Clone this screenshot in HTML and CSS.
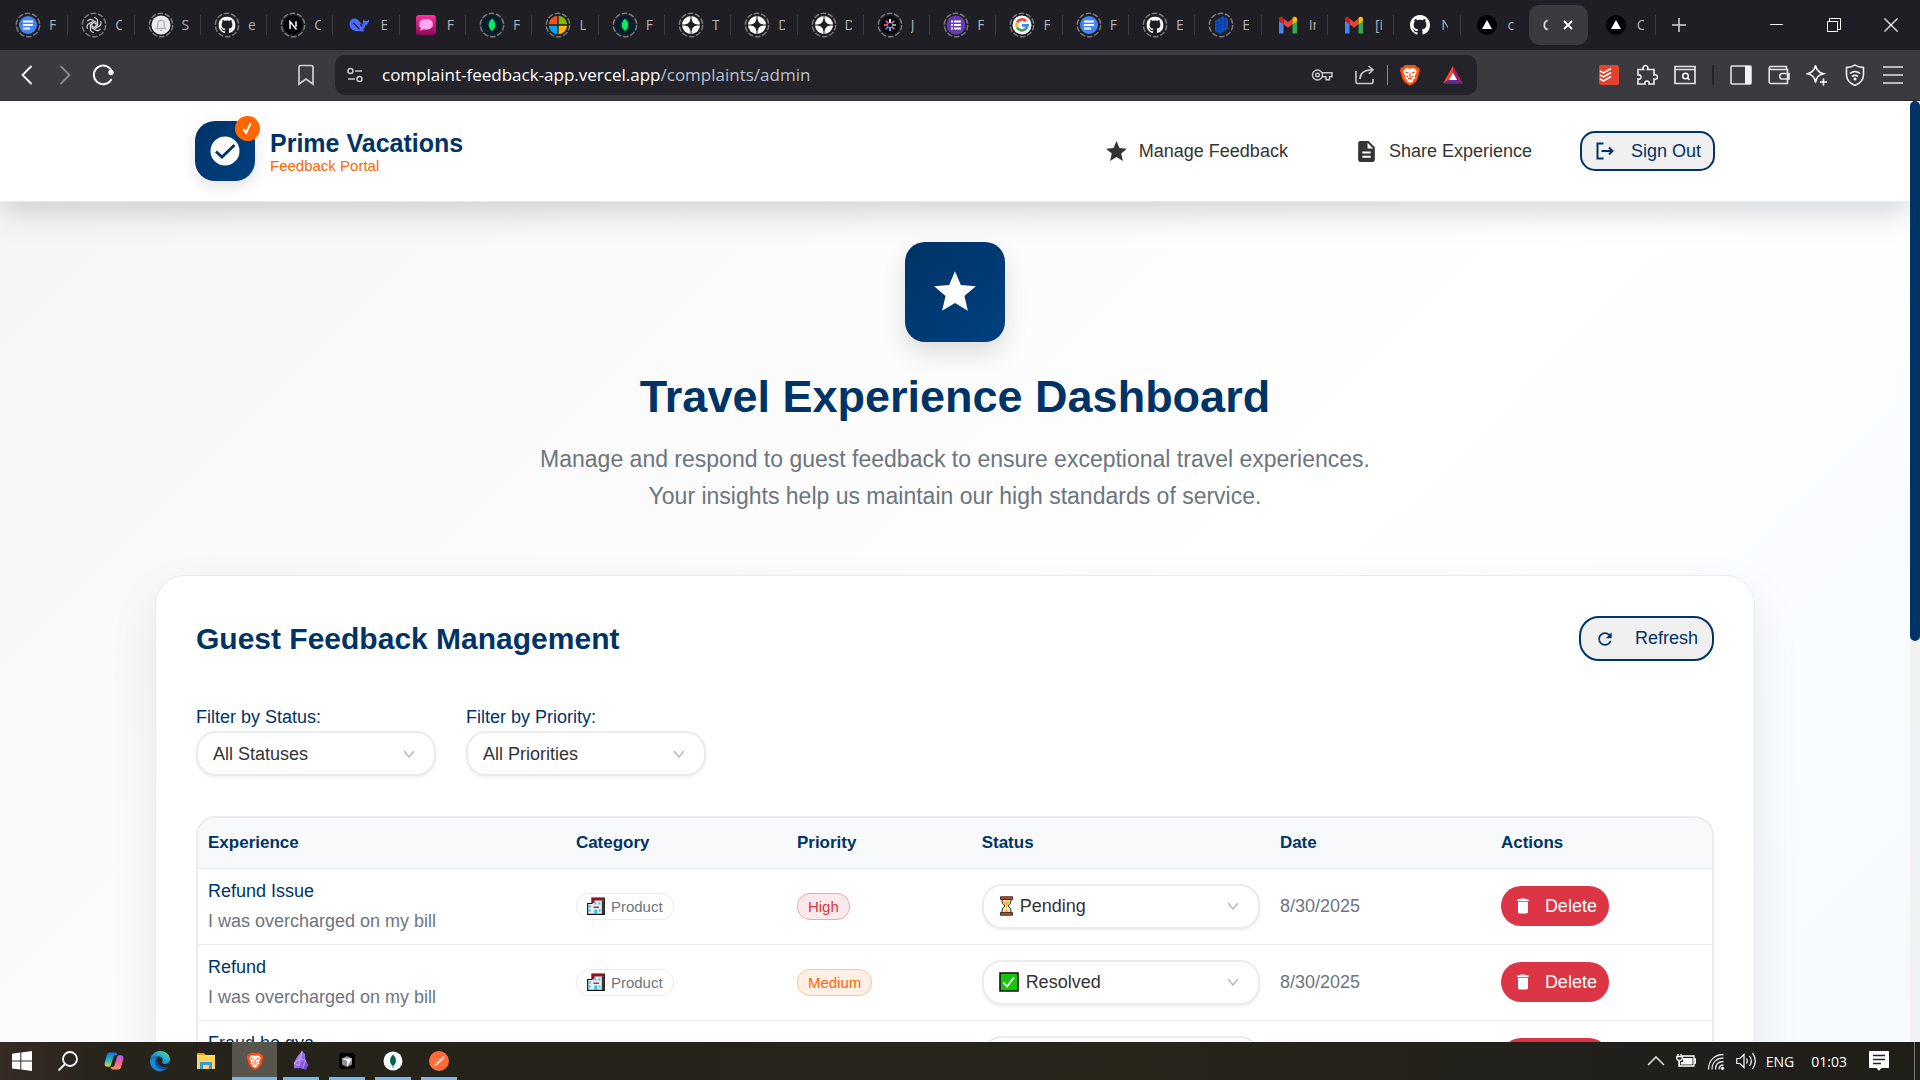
FILE: index.html
```html
<!DOCTYPE html>
<html lang="en">
<head>
<meta charset="utf-8">
<title>Travel Experience Dashboard</title>
<link rel="stylesheet" href="styles.css">
</head>
<body>
<svg class="defs" aria-hidden="true">
  <defs>
    <linearGradient id="gPink" x1="0" y1="0" x2="0" y2="1"><stop offset="0" stop-color="#ff2f9c"/><stop offset="1" stop-color="#8a0a58"/></linearGradient>
    <linearGradient id="gEdge" x1="0" y1="1" x2="1" y2="0"><stop offset="0" stop-color="#0c59a4"/><stop offset=".5" stop-color="#1b9de2"/><stop offset="1" stop-color="#66eb6e"/></linearGradient>
    <linearGradient id="gCopA" x1="0" y1="0" x2="0" y2="1"><stop offset="0" stop-color="#1b6fe0"/><stop offset=".5" stop-color="#22b6c0"/><stop offset="1" stop-color="#e6d040"/></linearGradient>
    <linearGradient id="gCopB" x1="0" y1="0" x2="0" y2="1"><stop offset="0" stop-color="#b45be8"/><stop offset=".5" stop-color="#f0609a"/><stop offset="1" stop-color="#ff9a4a"/></linearGradient>
    <linearGradient id="gGem" x1="0" y1="0" x2="1" y2="1"><stop offset="0" stop-color="#b79bff"/><stop offset="1" stop-color="#6a35d6"/></linearGradient>
    <symbol id="ring" viewBox="0 0 26 26"><circle cx="13" cy="13" r="11.7" fill="none" stroke="#77777c" stroke-width="1.5" stroke-dasharray="5.6 1.75"/></symbol>
    <symbol id="docs" viewBox="0 0 26 26"><use href="#ring"/><circle cx="13" cy="13" r="9" fill="#4285f4"/><path d="M8 9.5h10M8 13h10M8 16.5h7" stroke="#fff" stroke-width="1.8"/></symbol>
    <symbol id="openai" viewBox="0 0 26 26"><use href="#ring"/><g fill="none" stroke="#d6d6d8" stroke-width="1.2"><path id="petal" d="M13 5.500a3.600 3.600 0 0 1 3.600 3.600v4.200l-3.600 2.200"/><use href="#petal" transform="rotate(60 13 13)"/><use href="#petal" transform="rotate(120 13 13)"/><use href="#petal" transform="rotate(180 13 13)"/><use href="#petal" transform="rotate(240 13 13)"/><use href="#petal" transform="rotate(300 13 13)"/></g></symbol>
    <symbol id="bell" viewBox="0 0 26 26"><use href="#ring"/><circle cx="13" cy="13" r="9.5" fill="#ececec"/><path d="M8.5 16.5h9l-1.3-2v-3a3.2 3.2 0 0 0-6.4 0v3zM12 18.5h2M13 8V7" fill="none" stroke="#b4b4b4" stroke-width="1.3"/></symbol>
    <symbol id="octo" viewBox="0 0 16 16"><path fill="#fff" d="M8 0C3.58 0 0 3.58 0 8c0 3.54 2.29 6.53 5.47 7.59.4.07.55-.17.55-.38 0-.19-.01-.82-.01-1.49-2.01.37-2.53-.49-2.69-.94-.09-.23-.48-.94-.82-1.13-.28-.15-.68-.52-.01-.53.63-.01 1.08.58 1.23.82.72 1.21 1.87.87 2.33.66.07-.52.28-.87.51-1.07-1.78-.2-3.64-.89-3.64-3.95 0-.87.31-1.59.82-2.15-.08-.2-.36-1.02.08-2.12 0 0 .67-.21 2.2.82.64-.18 1.32-.27 2-.27s1.36.09 2 .27c1.53-1.04 2.2-.82 2.2-.82.44 1.1.16 1.92.08 2.12.51.56.82 1.27.82 2.15 0 3.07-1.87 3.75-3.65 3.95.29.25.54.73.54 1.48 0 1.07-.01 1.93-.01 2.2 0 .21.15.46.55.38A8.01 8.01 0 0016 8c0-4.42-3.58-8-8-8z"/></symbol>
    <symbol id="ghring" viewBox="0 0 26 26"><use href="#ring"/><use href="#octo" x="4.5" y="4.5" width="17" height="17"/></symbol>
    <symbol id="gh" viewBox="0 0 26 26"><use href="#octo" x="3" y="3" width="20" height="20"/></symbol>
    <symbol id="next" viewBox="0 0 26 26"><use href="#ring"/><circle cx="13" cy="13" r="9.5" fill="#000"/><path d="M10 17V9.5l6.5 8M16 9.3v5.500" fill="none" stroke="#fff" stroke-width="1.5"/></symbol>
    <symbol id="whale" viewBox="0 0 26 26"><path d="M3.500 12c0-3.500 2.400-5.500 5.300-5.500 2.200 0 3.200 1.500 5 3.300 1.200 1.200 2 2.600 3.800 2.600-1-1.800-.6-3.800-.3-5.500.9 1.500 1.900 2.300 3.200 2.200.9 0 1.600-.7 2.500-1.500.2 2.600-.8 5-3.500 5.700-.5 2.300-1.600 3.800-2.800 4.600.8.500 1.700.7 2.300.9-2 1.200-3.700.7-4.800.1-5.800 1.500-10.700-1.900-10.700-6.900z" fill="#4d6bfe"/><path d="M7 11c3.200 1 4 5.500 6.800 5.800M14 12.500c1.300.3 2 1.200 2 2.200" fill="none" stroke="#1f1e24" stroke-width="1.300"/></symbol>
    <symbol id="chat" viewBox="0 0 26 26"><rect x="3" y="3" width="20" height="20" rx="3" fill="url(#gPink)"/><path d="M13 7c4.200 0 7 2.200 7 5.300s-2.800 5.300-7 5.300c-1 0-1.800 0-2.700-.3L7 19l.8-3C6.600 15 6 13.800 6 12.300 6 9.200 8.800 7 13 7z" fill="#ffa8ee"/></symbol>
    <symbol id="leaf" viewBox="0 0 26 26"><use href="#ring"/><circle cx="13" cy="13" r="9.500" fill="#001e2b"/><path d="M13 6.500c2 2 3.300 4 3.300 6.800 0 2.200-1.300 4-3.300 5.700-2-1.700-3.300-3.500-3.300-5.700 0-2.800 1.300-4.800 3.300-6.800z" fill="#00ed64"/></symbol>
    <symbol id="ms" viewBox="0 0 26 26"><use href="#ring"/><path d="M12.300 12.300V3.800a9.200 9.200 0 0 0-8.500 8.500z" fill="#f25022"/><path d="M13.700 12.300V3.800a9.200 9.200 0 0 1 8.500 8.500z" fill="#7fba00"/><path d="M12.300 13.700v8.500a9.200 9.200 0 0 1-8.500-8.500z" fill="#00a4ef"/><path d="M13.700 13.700v8.500a9.200 9.200 0 0 0 8.500-8.500z" fill="#ffb900"/></symbol>
    <symbol id="star4" viewBox="0 0 26 26"><use href="#ring"/><circle cx="13" cy="13" r="9" fill="#fff"/><path d="M13 7c.8 3.300 2.300 5 5.500 6-3.200 1-4.700 2.700-5.500 6-.8-3.300-2.300-5-5.500-6 3.200-1 4.700-2.700 5.500-6zM13 3v4M13 19v4M4 13h4M18 13h4" fill="#1f1e24" stroke="#1f1e24" stroke-width="1"/></symbol>
    <symbol id="burst" viewBox="0 0 26 26"><use href="#ring"/><circle cx="13" cy="13" r="9.500" fill="#0b0b0e"/><g stroke-width="1.900"><path d="M13 11V7" stroke="#fff"/><path d="M13 15v4" stroke="#4fc3f7"/><path d="M11 13H7" stroke="#ff4f6d"/><path d="M15 13h4" stroke="#37d6c0"/><path d="M11.600 11.600 8.800 8.800" stroke="#d94bd0"/><path d="m14.400 11.600 2.800-2.800" stroke="#ff5a5a"/><path d="m11.600 14.400-2.800 2.800" stroke="#5b7cff"/><path d="m14.400 14.400 2.800 2.800" stroke="#ff4fa0"/></g></symbol>
    <symbol id="forms" viewBox="0 0 26 26"><use href="#ring"/><circle cx="13" cy="13" r="9.500" fill="#673ab7"/><path d="M8 9.500h2M8 13h2M8 16.500h2M11 9.500h7M11 13h7M11 16.500h7" stroke="#fff" stroke-width="1.900"/></symbol>
    <symbol id="goog" viewBox="0 0 26 26"><use href="#ring"/><circle cx="13" cy="13" r="9.500" fill="#fff"/><g fill="none" stroke-width="2.700"><path d="M17 9.200A5.500 5.500 0 0 0 8.200 10.300" stroke="#ea4335"/><path d="M8.200 10.300a5.500 5.500 0 0 0 0 5.400" stroke="#fbbc05"/><path d="M8.200 15.700a5.500 5.500 0 0 0 8.400 1.400" stroke="#34a853"/><path d="M16.600 17.100a5.500 5.500 0 0 0 1.900-3.700H13" stroke="#4285f4"/></g></symbol>
    <symbol id="hex" viewBox="0 0 26 26"><use href="#ring"/><path d="m7 9 8-5 5 3v10l-8 5-5-3z" fill="#0b4fc0"/><path d="M7.500 11.500 19.500 8M7.500 14.500l12-3.500M8 17.500l11.500-3.300M10 7v13M13 5.500v16M16.500 5v14" stroke="#0a3c95" stroke-width=".8"/></symbol>
    <symbol id="mail" viewBox="0 0 26 26"><path d="M4 21.500V8l4.500 3.300v10.200z" fill="#4285f4"/><path d="M17.500 21.500V11.300L22 8v13.500z" fill="#34a853"/><path d="M8.500 6.500 13 10l4.500-3.500v5.800L13 15.700l-4.500-3.400z" fill="#ea4335"/><path d="M4 9.200V7c0-2 2.200-2.800 3.700-1.700l.8.700v6.300z" fill="#c5221f"/><path d="M22 9.200V7c0-2-2.200-2.800-3.700-1.700l-.8.700v6.300z" fill="#fbbc04"/></symbol>
    <symbol id="vercel" viewBox="0 0 26 26"><circle cx="13" cy="13" r="10" fill="#000"/><path d="m13 8 5 9H8z" fill="#fff"/></symbol>
    <symbol id="lion" viewBox="0 0 24 24"><path d="M7 2h10l2 2 2 .5 1 3-1 3-1.500 6-3 3.500L12 22.800 7.500 20l-3-3.500L3 10.500l-1-3 1-3L5 4z" fill="#fb5012"/><path d="m8 5 4 .8L16 5l3 3.500-2.300 4.500.6 2.300-2.800 1.700 1 1L12 20l-3.500-2 1-1-2.800-1.700.6-2.300L5 8.500z" fill="#fff"/><path d="m7 9 3.500 1M17 9l-3.500 1M12 10.500v4M10 15.500h4M8.500 13l1.500 1M15.500 13 14 14" stroke="#fb5012" stroke-width="1.300"/></symbol>
    <symbol id="starsolid" viewBox="0 0 24 24"><path d="M12 17.270 18.180 21l-1.640-7.030L22 9.240l-7.190-.61L12 2 9.190 8.630 2 9.240l5.460 4.730L5.820 21z" fill="currentColor"/></symbol>
    <symbol id="chev" viewBox="0 0 14 14"><path d="m2 4 5 6 5-6" fill="none" stroke="#b9bcc0" stroke-width="1.500"/></symbol>
    <symbol id="trash" viewBox="0 0 24 24"><path d="M6 19c0 1.100.9 2 2 2h8c1.100 0 2-.9 2-2V7H6v12zM19 4h-3.500l-1-1h-5l-1 1H5v2h14V4z" fill="#fff"/></symbol>
    <symbol id="hotel" viewBox="0 0 18 18"><path d="M.700 6.500H5V1h12.300v16.300H.700z" fill="#e4f1f5" stroke="#111" stroke-width="1.200"/><path d="M5 1h12v2.500H7.500V6H5z" fill="#8f1420"/><path d="M14.800 3.500h2.200V17h-2.200z" fill="#3a3436"/><path d="M2 8.500h1.800v2H2zM2 12.500h1.800v2H2zM7.500 5.500h1.800v2H7.500zM11.500 5.500h1.800v2h-1.800zM11.800 12.500h1.800v2h-1.800zM7.300 12.500h3V17h-3z" fill="#27c4ee"/><path d="M6.500 9.500h5.500V11H6.500z" fill="#d3212d"/></symbol>
    <symbol id="hourglass" viewBox="0 0 14 20"><path d="M2.500 3c0 4 .5 5 3 7-2.500 2-3 3-3 7h9c0-4-.5-5-3-7 2.500-2 3-3 3-7z" fill="#f6e6c8" stroke="#222" stroke-width="1"/><path d="M3.500 5.500h7C10 7.500 9 8.500 7.300 10v4l3.200 3h-7l3.200-3v-4C5 8.500 4 7.500 3.500 5.500z" fill="#ffb52e"/><path d="M1 .800h12v2.600H1zM1 16.600h12v2.600H1z" fill="#e8461b" stroke="#222" stroke-width=".9"/></symbol>
    <symbol id="tick" viewBox="0 0 20 20"><path d="M1 1h18v18H1z" fill="#16c60c" stroke="#111" stroke-width="1.600"/><path d="m4.500 10.500 3.500 4 7-9" fill="none" stroke="#fff" stroke-width="1.800"/></symbol>
  </defs>
</svg>

<header class="tabstrip">
  <nav class="tabs" aria-label="Tabs">
    <button class="tab"><svg><use href="#docs"/></svg><span>F</span></button>
    <button class="tab"><svg><use href="#openai"/></svg><span>C</span></button>
    <button class="tab"><svg><use href="#bell"/></svg><span>S</span></button>
    <button class="tab"><svg><use href="#ghring"/></svg><span>e</span></button>
    <button class="tab"><svg><use href="#next"/></svg><span>C</span></button>
    <button class="tab"><svg><use href="#whale"/></svg><span>E</span></button>
    <button class="tab"><svg><use href="#chat"/></svg><span>F</span></button>
    <button class="tab"><svg><use href="#leaf"/></svg><span>F</span></button>
    <button class="tab"><svg><use href="#ms"/></svg><span>L</span></button>
    <button class="tab"><svg><use href="#leaf"/></svg><span>F</span></button>
    <button class="tab"><svg><use href="#star4"/></svg><span>T</span></button>
    <button class="tab"><svg><use href="#star4"/></svg><span>D</span></button>
    <button class="tab"><svg><use href="#star4"/></svg><span>D</span></button>
    <button class="tab"><svg><use href="#burst"/></svg><span>J</span></button>
    <button class="tab"><svg><use href="#forms"/></svg><span>F</span></button>
    <button class="tab"><svg><use href="#goog"/></svg><span>F</span></button>
    <button class="tab"><svg><use href="#docs"/></svg><span>F</span></button>
    <button class="tab"><svg><use href="#ghring"/></svg><span>E</span></button>
    <button class="tab"><svg><use href="#hex"/></svg><span>E</span></button>
    <button class="tab"><svg><use href="#mail"/></svg><span>In</span></button>
    <button class="tab"><svg><use href="#mail"/></svg><span>[i</span></button>
    <button class="tab"><svg><use href="#gh"/></svg><span>N</span></button>
    <button class="tab bare"><svg><use href="#vercel"/></svg><span>c</span></button>
    <button class="tab active"><span>C</span><svg viewBox="0 0 12 12"><path d="m2 2 8 8M10 2l-8 8" stroke="#fff" stroke-width="1.800"/></svg></button>
    <button class="tab"><svg><use href="#vercel"/></svg><span>C</span></button>
  </nav>
  <div class="windowbar">
    <button aria-label="New tab"><svg viewBox="0 0 14 14"><path d="M7 0v14M0 7h14" stroke="#d5d5d7" stroke-width="1.500"/></svg></button>
    <div class="winbtns">
      <button aria-label="Minimize"><svg viewBox="0 0 14 14"><path d="M0 6.500h13" stroke="#fff"/></svg></button>
      <button aria-label="Restore"><svg viewBox="0 0 14 14"><path d="M.5 3.500h10v10H.5zM2.500 3V.5h11v11H11" fill="none" stroke="#fff"/></svg></button>
      <button aria-label="Close"><svg viewBox="0 0 14 14"><path d="m.5.5 13 13M13.500.5l-13 13" stroke="#fff" stroke-width="1.200"/></svg></button>
    </div>
  </div>
</header>

<div class="toolbar">
  <div class="navbtns">
    <button aria-label="Back"><svg viewBox="0 0 22 22"><path d="m15.500 2-9 9 9 9" fill="none" stroke="#fff" stroke-width="1.800"/></svg></button>
    <button aria-label="Forward"><svg viewBox="0 0 22 22"><path d="m6.500 2 9 9-9 9" fill="none" stroke="#8b8a8e" stroke-width="1.800"/></svg></button>
    <button aria-label="Reload"><svg viewBox="0 0 22 22"><path d="M19.500 15A9.300 9.300 0 1 1 20 8" fill="none" stroke="#fff" stroke-width="1.900"/><circle cx="19" cy="8.500" r="2.700" fill="#fff"/></svg></button>
    <button class="mark" aria-label="Bookmark"><svg viewBox="0 0 22 22"><path d="M4 3.200C4 2 4.800 1.500 6 1.500h10c1.200 0 2 .5 2 1.700V20l-7-5-7 5z" fill="none" stroke="#cfced2" stroke-width="1.700"/></svg></button>
  </div>
  <div class="urlbar">
    <svg viewBox="0 0 20 20"><g fill="none" stroke="#c9c8cc" stroke-width="1.500"><circle cx="5.500" cy="6" r="2.500"/><path d="M10 6h7M3 14h7"/><circle cx="14.500" cy="14" r="2.500"/></g></svg>
    <p class="url">complaint-feedback-app.vercel.app<span>/complaints/admin</span></p>
    <div class="urlicons">
      <svg viewBox="0 0 22 22"><g fill="none" stroke="#c9c8cc" stroke-width="1.400"><circle cx="6.500" cy="11" r="5"/><circle cx="6.500" cy="11" r="1.800"/><path d="M11 8.800h10v4h-2.500v3h-3.500v-3h-4"/></g></svg>
      <svg viewBox="0 0 22 22"><path d="M2 7v11c0 1 .8 1.500 1.500 1.500h14c1 0 1.500-.7 1.500-1.500v-3M6 15c0-6 4-9 12-9.300M14.500 2 19 5.700l-4 4" fill="none" stroke="#c9c8cc" stroke-width="1.600"/></svg>
      <i class="bar"></i>
      <svg class="shield"><use href="#lion"/></svg>
      <svg class="bat" viewBox="0 0 24 22"><path d="M12 1 1 20.500l6.500-4L12 9z" fill="#ff4724"/><path d="m12 1 11 19.500-6.500-4L12 9z" fill="#9e1f63"/><path d="M1 20.500h22l-6.500-4.500h-9z" fill="#662d91"/><path d="m12 8.500 4.500 8h-9z" fill="#fff"/></svg>
    </div>
  </div>
  <div class="exts">
    <svg viewBox="0 0 22 22"><rect x="1" y="1" width="20" height="20" rx="2" fill="#e44332"/><path d="m2 7 3.500 2L13 4.500M2 11l3.500 2L13 8.500M2 15l3.500 2 7.500-4.500" fill="none" stroke="#fff" stroke-width="1.500"/></svg>
    <svg viewBox="0 0 22 22"><path d="M2 5.500h5.500c-1-2 0-4 2-4s3 2 2 4H18v5.500c2-.8 3.500.3 3.500 2s-1.500 2.800-3.500 2v5h-5c.5-2-.5-3-2-3s-2.500 1-2 3H2v-5c2 .5 3-.5 3-2s-1-2.500-3-2z" fill="none" stroke="#eee" stroke-width="1.600"/></svg>
    <svg viewBox="0 0 22 22"><path d="M1 2.500h20v17H1zM1 5.500h20" fill="none" stroke="#e2e2e4" stroke-width="1.700"/><circle cx="11.500" cy="12" r="2.800" fill="none" stroke="#fff" stroke-width="1.500"/><path d="m13.500 14 2 2" stroke="#fff" stroke-width="1.500"/></svg>
    <i class="bar dark"></i>
    <svg viewBox="0 0 22 22"><rect x="1" y="2" width="20" height="18" rx="1" fill="none" stroke="#e2e2e4" stroke-width="1.600"/><path d="M15 2h6v18h-6z" fill="#f4f4f6"/></svg>
    <svg viewBox="0 0 22 22"><path d="M18.500 6V2.500h-16C1 2.500 1 5.500 3 5.500h16.500v14H3c-1.200 0-1.800-.7-1.800-2V4M21 9.500h-7c-3 0-3 5.500 0 5.500h7z" fill="none" stroke="#e2e2e4" stroke-width="1.600"/></svg>
    <svg viewBox="0 0 22 22"><path d="M9.500 1.500c1 5 3 7 8 8.300-5 1.300-7 3.300-8 8.700-1-5.400-3-7.400-8-8.700 5-1.300 7-3.300 8-8.300zM17.500 14.500v7M14 18h7" fill="none" stroke="#fff" stroke-width="1.500"/></svg>
    <svg viewBox="0 0 22 22"><path d="M11 1c3 2 5.500 2.500 8.500 2.500V11c0 5-4 8.500-8.500 10.500C6.500 19.500 2.500 16 2.500 11V3.500C5.500 3.500 8 3 11 1zM6 9.500c3-2.500 7-2.500 10 0M8 12.500c2-1.500 4-1.500 6 0" fill="none" stroke="#fff" stroke-width="1.500"/><circle cx="11" cy="15" r="1.500" fill="#fff"/></svg>
    <svg viewBox="0 0 22 22"><path d="M1 3h20M1 11h20M1 19h20" stroke="#e2e2e4" stroke-width="1.700"/></svg>
  </div>
</div>

<div class="viewport">
  <div class="page">
    <header class="site">
      <div class="inner">
        <a class="brand" href="#">
          <span class="logo"><svg viewBox="0 0 30 30"><circle cx="15" cy="15" r="14.500" fill="#fff"/><path d="m6 15.500 6 5.500L24.500 9" fill="none" stroke="#036" stroke-width="2.800"/></svg><i class="check"><svg viewBox="0 0 14 14"><path d="m3 7.500 2.700 3.500L10 2" fill="none" stroke="#fff" stroke-width="2"/></svg></i></span>
          <span class="names"><strong>Prime Vacations</strong><small>Feedback Portal</small></span>
        </a>
        <nav class="menu">
          <a href="#"><svg><use href="#starsolid"/></svg>Manage Feedback</a>
          <a href="#"><svg viewBox="0 0 24 24"><path d="M14 2H6c-1.100 0-1.990.9-1.990 2L4 20c0 1.100.89 2 1.990 2H18c1.100 0 2-.9 2-2V8l-6-6zm2 16H8v-2h8v2zm0-4H8v-2h8v2zm-3-5V3.500L18.500 9H13z" fill="currentColor"/></svg>Share Experience</a>
          <button class="outline"><svg viewBox="0 0 20 20"><path d="M8.500 2.500H2.500v15h6M6.500 10h11M14 6.500l3.500 3.500-3.500 3.500" fill="none" stroke="currentColor" stroke-width="2"/></svg>Sign Out</button>
        </nav>
      </div>
    </header>
    <main>
      <section class="hero">
        <div class="badge"><svg><use href="#starsolid"/></svg></div>
        <h1>Travel Experience Dashboard</h1>
        <p>Manage and respond to guest feedback to ensure exceptional travel experiences.<br>Your insights help us maintain our high standards of service.</p>
      </section>
      <section class="card">
        <div class="cardhead">
          <h2>Guest Feedback Management</h2>
          <button class="outline refresh"><svg viewBox="0 0 24 24"><path d="M17.650 6.350C16.200 4.900 14.210 4 12 4c-4.420 0-7.990 3.580-7.990 8s3.570 8 7.990 8c3.730 0 6.840-2.550 7.730-6h-2.080c-.82 2.330-3.040 4-5.650 4-3.310 0-6-2.690-6-6s2.690-6 6-6c1.660 0 3.140.69 4.220 1.780L13 11h7V4l-2.350 2.350z" fill="currentColor"/></svg>Refresh</button>
        </div>
        <div class="filters">
          <div class="filter"><label for="fs">Filter by Status:</label><div class="pick"><select id="fs"><option>All Statuses</option></select><svg class="chev"><use href="#chev"/></svg></div></div>
          <div class="filter"><label for="fp">Filter by Priority:</label><div class="pick"><select id="fp"><option>All Priorities</option></select><svg class="chev"><use href="#chev"/></svg></div></div>
        </div>
        <div class="tablebox">
          <table>
            <colgroup><col class="c1"><col class="c2"><col class="c3"><col class="c4"><col class="c2"><col></colgroup>
            <thead><tr><th>Experience</th><th>Category</th><th>Priority</th><th>Status</th><th>Date</th><th>Actions</th></tr></thead>
            <tbody>
              <tr>
                <td><b>Refund Issue</b><p>I was overcharged on my bill</p></td>
                <td><span class="tag"><svg><use href="#hotel"/></svg>Product</span></td>
                <td><span class="tag high">High</span></td>
                <td><div class="pick"><svg class="glass"><use href="#hourglass"/></svg><select aria-label="Status"><option>Pending</option></select><svg class="chev"><use href="#chev"/></svg></div></td>
                <td>8/30/2025</td>
                <td><button class="delete"><svg><use href="#trash"/></svg>Delete</button></td>
              </tr>
              <tr>
                <td><b>Refund</b><p>I was overcharged on my bill</p></td>
                <td><span class="tag"><svg><use href="#hotel"/></svg>Product</span></td>
                <td><span class="tag medium">Medium</span></td>
                <td><div class="pick"><svg class="box"><use href="#tick"/></svg><select aria-label="Status"><option>Resolved</option></select><svg class="chev"><use href="#chev"/></svg></div></td>
                <td>8/30/2025</td>
                <td><button class="delete"><svg><use href="#trash"/></svg>Delete</button></td>
              </tr>
              <tr>
                <td><b>Fraud ho gya</b><p>I was overcharged on my bill</p></td>
                <td><span class="tag"><svg><use href="#hotel"/></svg>Product</span></td>
                <td><span class="tag high">High</span></td>
                <td><div class="pick"><svg class="glass"><use href="#hourglass"/></svg><select aria-label="Status"><option>Pending</option></select><svg class="chev"><use href="#chev"/></svg></div></td>
                <td>8/30/2025</td>
                <td><button class="delete"><svg><use href="#trash"/></svg>Delete</button></td>
              </tr>
            </tbody>
          </table>
        </div>
      </section>
    </main>
  </div>
  <div class="scroll"><div class="thumb"></div></div>
</div>

<footer class="taskbar">
  <div class="apps">
    <button aria-label="Start"><svg viewBox="0 0 20 20"><path d="m0 2.800 8.300-1.200v8H0zM9.300 1.500 20 0v9.600H9.300zM0 10.600h8.300v8L0 17.400zM9.300 10.600H20V20L9.300 18.600z" fill="#fff"/></svg></button>
    <button aria-label="Search"><svg viewBox="0 0 20 20"><circle cx="12" cy="8" r="7" fill="none" stroke="#fff" stroke-width="1.800"/><path d="m7 13-6.500 6.500" stroke="#fff" stroke-width="1.800"/></svg></button>
    <button aria-label="Copilot"><svg viewBox="0 0 20 20"><path d="M5.500 1.500H11c1.500 0 2.200 1 2.600 2.500h-1.800c-1.500 0-2.200 1-2.600 2.500L7 14c-.4 1.200-1 1.800-2.200 1.800H3.500c-2.300 0-3.300-1.700-2.800-3.800l2-7.500c.5-2 1.300-3 2.800-3z" fill="url(#gCopA)"/><path d="M14.500 18.500H9c-1.500 0-2.200-1-2.600-2.500h1.800c1.500 0 2.200-1 2.600-2.500L13 6c.4-1.200 1-1.800 2.200-1.800h1.300c2.300 0 3.300 1.700 2.800 3.800l-2 7.500c-.5 2-1.300 3-2.800 3z" fill="url(#gCopB)"/></svg></button>
    <button aria-label="Edge"><svg viewBox="0 0 20 20"><path d="M0 9.500C.5 4 5 0 10 0c6 0 10 4 10 8.500 0 3-2.500 4.500-5 4.500-1.800 0-3-.7-3-1.500 0-.6.800-1 .8-2.200C12.800 7 10.500 5.500 7.500 5.500 4 5.500 1 7 0 9.500z" fill="url(#gEdge)"/><path d="M0 9.500C1.500 6.500 5 6 7.500 6c-2 1.500-2.800 4-2 6.800 1.300 4 5.500 6 10 4.800 1-.3 2-.9 2.800-1.500C16.500 18.500 13.500 20 10 20 4 20-.5 15 0 9.500z" fill="#1689d8"/><path d="M7.500 7.500c-1 4 2 8.500 7.500 8.800 1.200 0 2.400-.1 3.500-.6-3 4.300-10.500 3.500-12.500-1.500-1-2.500-.5-5 1.500-6.700z" fill="#0b4f9c"/></svg></button>
    <button aria-label="Files"><svg viewBox="0 0 20 20"><path d="M1 2h7l2 2.500h-9z" fill="#e8a200"/><path d="M1 4h18v14H1z" fill="#ffd65c"/><path d="M4 18v-7h12v7h-3v-4H7v4z" fill="#3a96dd"/></svg></button>
    <button class="open current" aria-label="Brave"><svg><use href="#lion"/></svg></button>
    <button class="open" aria-label="Notes"><svg viewBox="0 0 20 20"><path d="m11 0 3 3 .5 6 3 5-2.500 5-6-2-6 .5L3 12l3-6z" fill="url(#gGem)"/><path d="m11 0-2 8-6 4 5 3 1-7 5.500 1-2.500 8" fill="none" stroke="#d5c6ff" stroke-width=".7"/></svg></button>
    <button class="open" aria-label="Editor"><svg viewBox="0 0 20 20"><rect x="2" y="2" width="16" height="16" rx="3" fill="#000"/><path d="m10 5 5 2.500v6L10 16l-5-2.500v-6z" fill="#8f8f8f"/><path d="M5 7.500h10L10 16v-6z" fill="#f2f2f2"/></svg></button>
    <button class="open" aria-label="Compass"><svg viewBox="0 0 20 20"><circle cx="10" cy="10" r="9.500" fill="#fff"/><path d="M10 3.500c2 2 3 4 3 6.300 0 2.200-1 3.700-2.600 5V17h-.8v-2.200C8 13.500 7 12 7 9.800 7 7.500 8 5.500 10 3.500z" fill="#00684a"/></svg></button>
    <button class="open" aria-label="Postman"><svg viewBox="0 0 20 20"><circle cx="10" cy="10" r="10" fill="#ff6c37"/><path d="m4.500 15.500 2-3.500L13 6l2-1 .5 1.500-1.500 2L8 14z" fill="#ffe3d6"/><path d="m4 16 10-10" stroke="#ff6c37" stroke-width=".8"/></svg></button>
  </div>
  <div class="tray">
    <svg viewBox="0 0 20 20"><path d="m2 14 8-8 8 8" fill="none" stroke="#fff" stroke-width="1.300"/></svg>
    <svg viewBox="0 0 20 20"><path d="M6 5h12v10H3V9M18 8h1.500v4H18M2 3v3M5 3v3M.8 5.500h5.400v2c0 1-.8 1.800-1.800 1.800H2.600C1.600 9.300.8 8.500.8 7.500zM3.500 9v6" fill="none" stroke="#fff" stroke-width="1.300"/><path d="M7 7h9.500v6.500H5V11h2z" fill="#fff"/></svg>
    <svg viewBox="0 0 20 20"><g fill="none" stroke="#ddd" stroke-width="1.300"><path d="M13 18.500c0-3 1.500-4.500 4.500-4.500M9.500 18.500c0-5 3-8 8-8M6 18.500C6 11.500 10.500 7 17.500 7M2.500 18.500c0-9 6-15 15-15"/></g><circle cx="16.500" cy="17.300" r="1.600" fill="#fff"/></svg>
    <svg viewBox="0 0 20 20"><path d="M.8 7.500h3L8 3.500v13l-4.200-4h-3zM10.500 7.500c1 1.500 1 3.500 0 5M13.500 5c2.200 3 2.200 7 0 10M16.500 2c3.500 5 3.500 11 0 16" fill="none" stroke="#fff" stroke-width="1.200"/></svg>
    <span>ENG</span>
    <time>01:03</time>
    <svg class="note" viewBox="0 0 20 20"><path d="M0 0h20v17h-7.500L10 19.700 7.500 17H0z" fill="#fff"/><path d="M4 4.500h12M4 8.500h12M4 12.500h8" stroke="#222" stroke-width="1.300"/></svg>
    <i class="peek"></i>
  </div>
</footer>
</body>
</html>
```
FILE: styles.css
```css
* { box-sizing: border-box; }
html, body { height: 100%; margin: 0; }
body {
  display: flex;
  flex-direction: column;
  overflow: hidden;
  font-family: "Liberation Sans", Arial, sans-serif;
  font-size: 18px;
  color: #333;
}
h1, h2, p { margin: 0; }
a { color: inherit; text-decoration: none; }
button { font: inherit; color: inherit; border: 0; background: none; padding: 0; }
svg { display: block; flex: none; }
.defs { position: absolute; width: 0; height: 0; }

/* Browser tabs */
.tabstrip { display: flex; flex: none; height: 50px; background: #1f1e24; font-family: "Open Sans", sans-serif; }
.tabs { display: flex; flex: 1; min-width: 0; align-items: center; padding-left: 2px; }
.tab {
  display: flex;
  flex: 1 1 0;
  min-width: 0;
  height: 20px;
  align-items: center;
  gap: 8px;
  padding-left: 13px;
  border-right: 1px solid #3d3c42;
}
.tab svg { width: 26px; height: 26px; }
.tab span {
  width: 7px;
  overflow: hidden;
  text-align: left;
  font-size: 14px;
  line-height: 20px;
  color: #b0afb3;
}
.tab.bare { border-color: transparent; }
.tab.active {
  flex: 0 0 59px;
  height: 40px;
  margin: 0 2px;
  padding-left: 14px;
  gap: 14px;
  border: 0;
  border-radius: 10px;
  background: #3b3a3f;
}
.tab.active span { color: #fff; width: 5px; }
.tab.active svg { width: 12px; height: 12px; }
.windowbar { display: flex; flex: none; width: 264px; align-items: center; justify-content: space-between; padding: 0 22px 0 16px; }
.windowbar svg { width: 14px; height: 14px; }
.winbtns { display: flex; gap: 43px; }

/* Browser toolbar */
.toolbar { display: flex; flex: none; height: 51px; align-items: center; background: #3b3a3f; border-bottom: 1px solid #2c2a33; }
.toolbar svg { width: 22px; height: 22px; }
.navbtns { display: flex; flex: none; width: 335px; gap: 16px; padding: 0 18px 0 16px; }
.navbtns .mark { margin-left: auto; }
.urlbar { display: flex; flex: 1; height: 40px; align-items: center; padding: 0 13px 0 10px; border-radius: 10px; background: #242329; }
.urlbar > svg { width: 20px; height: 20px; }
.url { flex: 1; padding-left: 17px; font-family: "Open Sans", sans-serif; font-size: 17px; line-height: 24px; color: #fff; }
.url span { color: #b9c0cc; }
.urlicons { display: flex; align-items: center; gap: 21px; }
.toolbar .shield { width: 24px; height: 24px; margin: 0 -1px; }
.bar { width: 1px; height: 20px; margin: 0 -10px; background: #88878c; }
.bar.dark { width: 2px; margin: 0; background: #242329; }
.exts { display: flex; flex: none; width: 443px; align-items: center; justify-content: flex-end; gap: 16px; padding-right: 16px; }

/* Page */
.viewport { display: flex; flex: 1; min-height: 0; }
.page {
  flex: 1;
  min-width: 0;
  overflow: hidden;
  background: linear-gradient(135deg, #f5f5f5 0%, #fff 50%, #f0f8ff 100%) 0 0 / 100% 160%;
}
.scroll { flex: none; width: 10px; background: #f1f1f1; }
.thumb { height: 57.4%; border-radius: 5px; background: #036; }

.site { background: #fff; border-bottom: 1px solid #e9ecef; box-shadow: 0 8px 32px rgba(0, 0, 0, .18); }
.inner { display: flex; max-width: 1520px; height: 100px; margin: 0 auto; align-items: center; justify-content: space-between; }
.brand { display: flex; align-items: center; gap: 15px; }
.logo {
  position: relative;
  display: grid;
  width: 60px;
  height: 60px;
  place-items: center;
  border-radius: 20px;
  background: linear-gradient(135deg, #036, #004080);
  box-shadow: 0 5px 15px rgba(0, 0, 0, .12);
}
.logo > svg { width: 30px; height: 30px; }
.check { position: absolute; top: -5px; right: -5px; display: grid; width: 25px; height: 25px; place-items: center; border-radius: 50%; background: #f60; }
.check svg { width: 15px; height: 15px; }
.names { display: flex; flex-direction: column; padding-top: 2px; }
.names strong { font-size: 25px; line-height: 28px; color: #036; }
.names small { font-size: 15px; line-height: 18px; color: #f60; }
.menu { display: flex; align-items: center; }
.menu a { display: flex; align-items: center; gap: 10px; margin-right: 48px; }
.menu a + a { margin-left: 18px; }
.menu a svg { width: 25px; height: 25px; }
.outline {
  display: flex;
  width: 135px;
  height: 40px;
  align-items: center;
  justify-content: space-between;
  padding: 0 12px 0 13px;
  border: 2px solid #036;
  border-radius: 15px;
  background: #f0f0f0;
  color: #036;
}
.outline svg { width: 20px; height: 20px; }
.refresh { height: 45px; padding: 0 14px; border-radius: 20px; }

.hero { display: flex; flex-direction: column; align-items: center; padding: 40px 0 60px; text-align: center; }
.badge { display: grid; width: 100px; height: 100px; margin-bottom: 28px; place-items: center; border-radius: 20px; background: linear-gradient(135deg, #036, #004080); box-shadow: 0 12px 25px rgba(0, 0, 0, .12); color: #fff; }
.badge svg { width: 50px; height: 50px; }
.hero h1 { margin-bottom: 17px; font-size: 45px; line-height: 54px; color: #036; }
.hero p { font-size: 23px; line-height: 37px; color: #6c757d; }

.card { max-width: 1600px; margin: 0 auto; padding: 40px; border: 1px solid #e9ecef; border-radius: 30px; background: #fff; box-shadow: 0 20px 50px rgba(0, 0, 0, .08); }
.cardhead { display: flex; align-items: center; justify-content: space-between; margin-bottom: 40px; }
.cardhead h2 { font-size: 30px; line-height: 36px; color: #036; }
.filters { display: flex; gap: 30px; margin-bottom: 40px; }
.filter { width: 240px; }
.filter label { display: block; height: 30px; line-height: 32px; color: #036; }
.pick { display: flex; height: 45px; align-items: center; gap: 4px; padding: 0 18px 0 15px; border: 2px solid #e9ecef; border-radius: 20px; background: #fff; box-shadow: 0 2px 3px rgba(0, 0, 0, .06); }
.pick select { flex: 1; min-width: 0; appearance: none; padding: 0; border: 0; background: none; font: inherit; color: #333; }
.chev { width: 14px; height: 14px; }
.glass { width: 15px; height: 20px; margin-right: 2px; }
.box { width: 20px; height: 20px; margin-right: 3px; }

.tablebox { overflow: hidden; border: 2px solid #e9ecef; border-radius: 20px; }
table { width: 100%; border-collapse: separate; border-spacing: 0; table-layout: fixed; }
.c1 { width: 24.3%; }
.c2 { width: 14.6%; }
.c3 { width: 12.2%; }
.c4 { width: 19.7%; }
th { height: 51px; padding: 0 10px; border-bottom: 1px solid #e9ecef; background: #f8f9fa; text-align: left; font-size: 17px; color: #036; }
td { height: 76px; padding: 7px 10px 8px; border-bottom: 1px solid #e9ecef; vertical-align: middle; color: #6c757d; }
td b { display: block; font-weight: 400; line-height: 30px; color: #036; }
td p { line-height: 30px; }
.tag { display: inline-flex; height: 27px; align-items: center; gap: 6px; padding: 0 10px; border: 1px solid #e9ecef; border-radius: 13px; background: #fff; font-size: 15px; vertical-align: middle; }
.tag svg { width: 18px; height: 18px; }
.high { border-color: #f1a7ae; background: #fbe9eb; color: #dc3545; }
.medium { border-color: #ffc299; background: #fff0e5; color: #f60; }
.delete { display: flex; width: 108px; height: 40px; align-items: center; justify-content: space-between; padding: 0 12px; border-radius: 20px; background: #dc3545; color: #fff; }
.delete svg { width: 20px; height: 20px; }

/* Desktop taskbar */
.taskbar { display: flex; flex: none; height: 38px; justify-content: space-between; background: linear-gradient(90deg, #362b25, #25231a 6%, #27241a 60%, #201f1b 85%, #1f1e19); }
.apps { display: flex; }
.apps button { display: flex; width: 46px; align-items: center; justify-content: center; padding-right: 2px; }
.apps svg { width: 20px; height: 20px; }
.apps .open { width: 36px; margin: 0 5px; padding: 3px 0 0; border-bottom: 3px solid #76b9ed; }
.apps .current { width: 45px; margin: 0 1px 0 2px; background: #58554d; }
.tray { display: flex; align-items: center; gap: 10px; font-family: "Open Sans", sans-serif; font-size: 14px; color: #fff; }
.tray svg { width: 20px; height: 20px; }
.tray time { margin: 0 12px 0 7px; }
.peek { width: 1px; height: 38px; margin: 0 5px 0 15px; background: #7b7a76; }
```
